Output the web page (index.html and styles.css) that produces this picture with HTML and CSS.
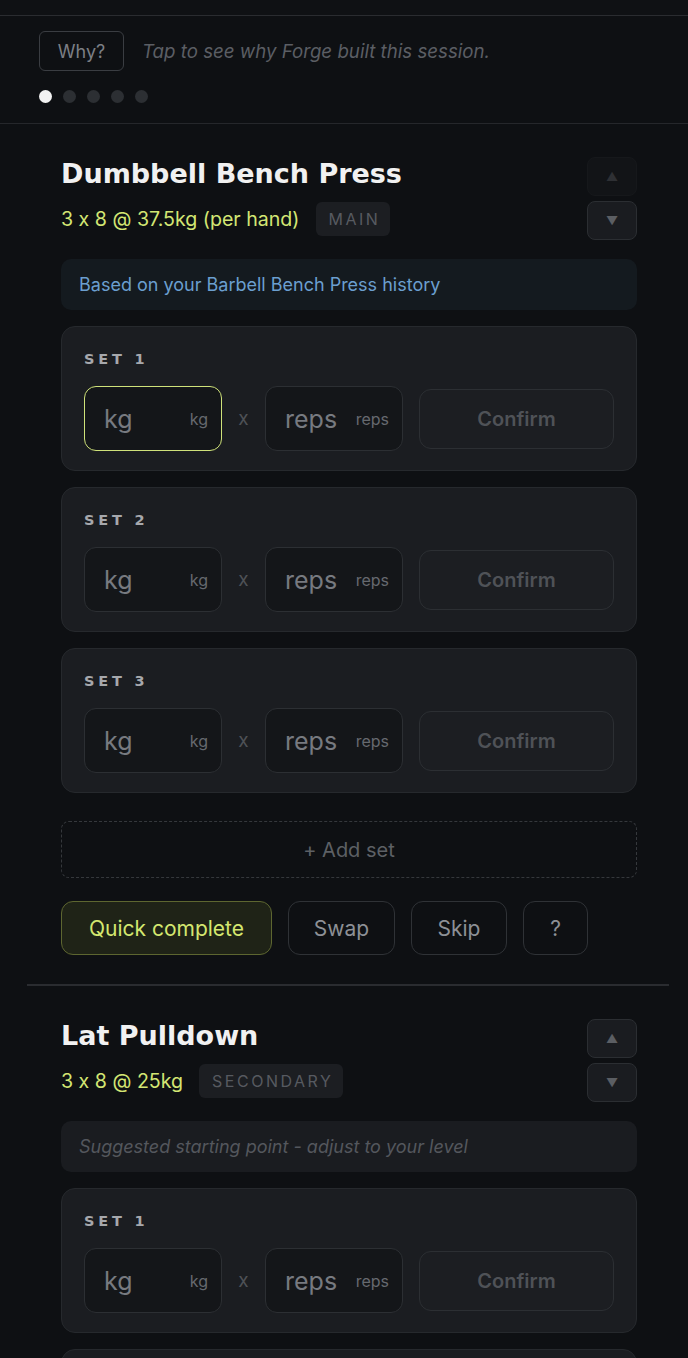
FILE: index.html
```html
<!DOCTYPE html>
<html>
<head>
<meta charset="utf-8">
<link rel="stylesheet" href="styles.css">
</head>
<body>
<div class="topbar"></div>
<section class="why">
  <div class="why-row">
    <button class="why-btn">Why?</button>
    <span class="why-text">Tap to see why Forge built this session.</span>
  </div>
  <div class="dots">
    <span class="dot active"></span><span class="dot"></span><span class="dot"></span><span class="dot"></span><span class="dot"></span>
  </div>
</section>

<section class="exercise">
  <div class="ex-head">
    <div class="ex-info">
      <h2 class="ex-title">Dumbbell Bench Press</h2>
      <div class="ex-meta">
        <span class="ex-target">3 x 8 @ 37.5kg (per hand)</span>
        <span class="badge">MAIN</span>
      </div>
    </div>
    <div class="arrows">
      <button class="arrow disabled">▲</button>
      <button class="arrow">▼</button>
    </div>
  </div>
  <div class="note note-blue">Based on your Barbell Bench Press history</div>

  <div class="set">
    <div class="set-label">SET 1</div>
    <div class="set-row">
      <div class="field focus"><span class="ph">kg</span><span class="unit">kg</span></div>
      <span class="times">x</span>
      <div class="field"><span class="ph">reps</span><span class="unit">reps</span></div>
      <button class="confirm">Confirm</button>
    </div>
  </div>
  <div class="set">
    <div class="set-label">SET 2</div>
    <div class="set-row">
      <div class="field"><span class="ph">kg</span><span class="unit">kg</span></div>
      <span class="times">x</span>
      <div class="field"><span class="ph">reps</span><span class="unit">reps</span></div>
      <button class="confirm">Confirm</button>
    </div>
  </div>
  <div class="set">
    <div class="set-label">SET 3</div>
    <div class="set-row">
      <div class="field"><span class="ph">kg</span><span class="unit">kg</span></div>
      <span class="times">x</span>
      <div class="field"><span class="ph">reps</span><span class="unit">reps</span></div>
      <button class="confirm">Confirm</button>
    </div>
  </div>

  <button class="add-set">+ Add set</button>
  <div class="actions">
    <button class="act primary">Quick complete</button>
    <button class="act swap">Swap</button>
    <button class="act skip">Skip</button>
    <button class="act q">?</button>
  </div>
</section>

<hr class="divider">

<section class="exercise second">
  <div class="ex-head">
    <div class="ex-info">
      <h2 class="ex-title">Lat Pulldown</h2>
      <div class="ex-meta">
        <span class="ex-target">3 x 8 @ 25kg</span>
        <span class="badge">SECONDARY</span>
      </div>
    </div>
    <div class="arrows">
      <button class="arrow">▲</button>
      <button class="arrow">▼</button>
    </div>
  </div>
  <div class="note note-gray">Suggested starting point - adjust to your level</div>

  <div class="set">
    <div class="set-label">SET 1</div>
    <div class="set-row">
      <div class="field"><span class="ph">kg</span><span class="unit">kg</span></div>
      <span class="times">x</span>
      <div class="field"><span class="ph">reps</span><span class="unit">reps</span></div>
      <button class="confirm">Confirm</button>
    </div>
  </div>
  <div class="set">
    <div class="set-label">SET 2</div>
    <div class="set-row">
      <div class="field"><span class="ph">kg</span><span class="unit">kg</span></div>
      <span class="times">x</span>
      <div class="field"><span class="ph">reps</span><span class="unit">reps</span></div>
      <button class="confirm">Confirm</button>
    </div>
  </div>
</section>
</body>
</html>
```

FILE: styles.css
```css
* { box-sizing: border-box; }
html, body { margin: 0; padding: 0; }
body {
  background: #0e1013;
  font-family: Inter, "Noto Sans", sans-serif;
  font-feature-settings: "calt" 0;
  color: #e8e8e8;
  width: 688px;
  height: 1358px;
  overflow: hidden;
}
button { font-family: inherit; font-feature-settings: "calt" 0; cursor: pointer; }

.topbar {
  height: 16px;
  background: #0f1114;
  border-bottom: 1px solid #2a2c30;
}

.why {
  padding: 15px 39px 0 39px;
  height: 108px;
  border-bottom: 1px solid #25272b;
}
.why-row { display: flex; align-items: center; gap: 18px; }
.why-btn {
  width: 85px; height: 40px;
  background: transparent;
  border: 1px solid #3a3d42;
  border-radius: 6px;
  color: #7c7f85;
  font-size: 18px;
}
.why-text {
  font-style: italic;
  font-size: 18.7px;
  color: #5b5e64;
}
.dots { display: flex; gap: 11px; margin-top: 19px; }
.dot { width: 13px; height: 13px; border-radius: 50%; background: #2c2f33; }
.dot.active { background: #f2f2f2; }

.exercise { padding: 33px 51px 0 61px; }
.exercise.second { padding-top: 33px; }

.ex-head { display: flex; justify-content: space-between; align-items: flex-start; }
.ex-title {
  margin: 0;
  font-family: "DejaVu Sans", sans-serif;
  font-weight: bold;
  font-size: 27px;
  letter-spacing: 0;
  color: #f1f1f1;
  line-height: 34px;
}
.ex-meta { display: flex; align-items: center; gap: 16px; margin-top: 11px; }
.ex-target { color: #d3e673; font-size: 19.6px; }
.badge {
  background: #1c1e22;
  color: #575a60;
  border-radius: 6px;
  font-size: 16px;
  letter-spacing: 2.5px;
  padding: 7px 10px 7px 13px;
  line-height: 20px;
}
.arrows { display: flex; flex-direction: column; gap: 5px; }
.arrow {
  width: 50px; height: 39px;
  background: #1a1c20;
  border: 1px solid #2b2e32;
  border-radius: 8px;
  color: #5b5e63;
  font-size: 12px;
  padding: 0;
}
.arrow.disabled { background: #121417; border-color: #16181b; color: #2e3034; }

.note {
  margin-top: 19px;
  height: 51px;
  border-radius: 10px;
  display: flex; align-items: center;
  padding-left: 18px;
  font-size: 18px;
}
.note-blue { background: #141a1f; color: #6b9fcf; }
.note-gray { background: #1a1c20; color: #54575d; font-style: italic; }

.set {
  margin-top: 16px;
  height: 145px;
  background: #1b1d21;
  border: 1px solid #26292d;
  border-radius: 14px;
  padding: 23px 22px 0 22px;
}
.set-label {
  font-family: "DejaVu Sans", sans-serif;
  font-weight: bold;
  font-size: 14.5px;
  letter-spacing: 3.8px;
  color: #a6a8ac;
  line-height: 18px;
}
.set-row { display: flex; align-items: center; margin-top: 18px; }
.field {
  width: 138px; height: 65px;
  background: #141619;
  border: 1px solid #2c2f33;
  border-radius: 12px;
  display: flex; align-items: center; justify-content: space-between;
  padding: 0 13px 0 19px;
}
.field.focus { border: 1.5px solid #cfe27a; }
.ph { font-size: 25px; color: #777a80; }
.unit { font-size: 16px; color: #66696f; }
.times { width: 43px; text-align: center; color: #4e5156; font-size: 19px; }
.confirm {
  margin-left: 16px;
  width: 195px; height: 60px;
  background: #1c1e22;
  border: 1px solid #2c2f33;
  border-radius: 12px;
  color: #4f5257;
  font-size: 20px;
  font-weight: 600;
}

.add-set {
  display: block;
  width: 100%;
  margin-top: 28px;
  height: 57px;
  background: transparent;
  border: 1px dashed #35383c;
  border-radius: 8px;
  color: #5d6065;
  font-size: 20px;
}
.actions { display: flex; gap: 16px; margin-top: 23px; }
.act {
  height: 54px;
  background: transparent;
  border: 1px solid #2f3236;
  border-radius: 12px;
  color: #8d9096;
  font-size: 21px;
  padding: 0;
}
.act.primary {
  background: #1f2317;
  border-color: #5d6630;
  color: #d4e76f;
  width: 211px;
}
.act.swap { width: 107px; }
.act.skip { width: 96px; }
.act.q { width: 65px; }

.divider {
  margin: 29px 19px 0 27px;
  border: 0;
  height: 2px;
  background: #2a2c30;
}
```
